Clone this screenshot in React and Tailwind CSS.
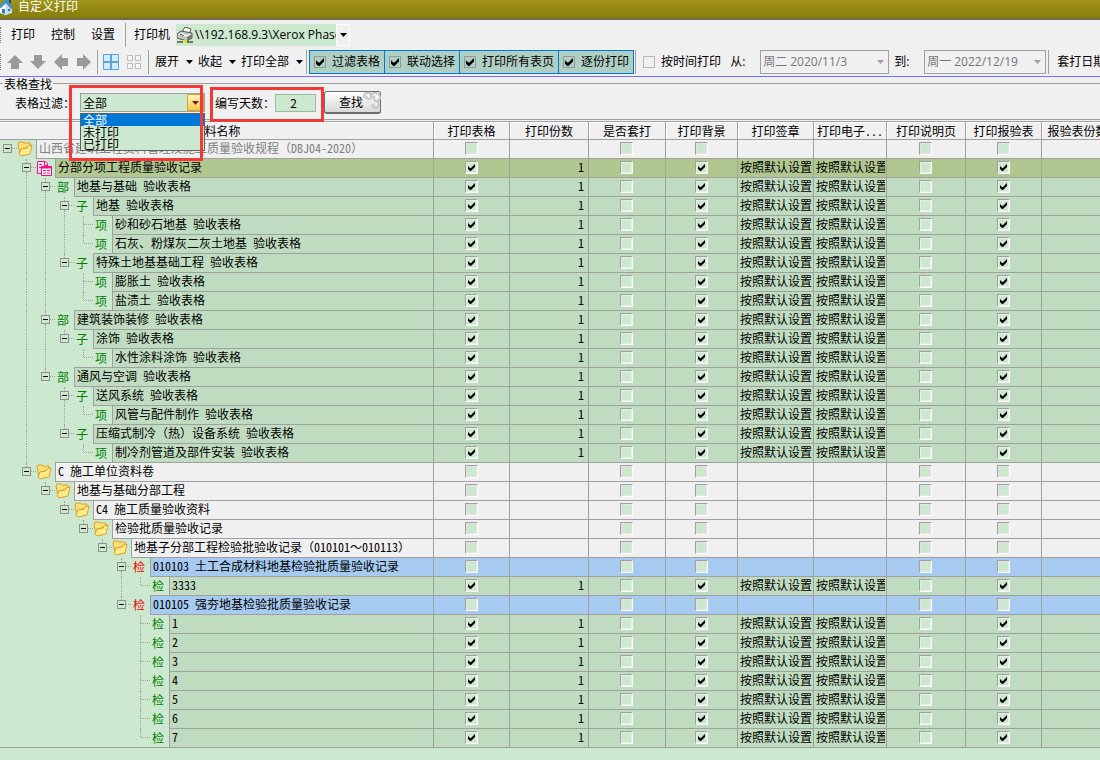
import { useState } from 'react'

const COLUMNS = [
  { key: 'print', label: '打印表格', type: 'check' },
  { key: 'copies', label: '打印份数', type: 'number' },
  { key: 'overlay', label: '是否套打', type: 'check' },
  { key: 'background', label: '打印背景', type: 'check' },
  { key: 'seal', label: '打印签章', type: 'text' },
  { key: 'digital', label: '打印电子...', type: 'text' },
  { key: 'notes', label: '打印说明页', type: 'check' },
  { key: 'report', label: '打印报验表', type: 'check' },
  { key: 'reportCopies', label: '报验表份数', type: 'empty' },
]

const CHECKED = ['print', 'background', 'report']

// [depth, icon, name, kind]
const ROWS = [
  [0, 'folder', '山西省建筑工程资料管理及施工质量验收规程（DBJ04-2020）', 'root'],
  [1, 'doc', '分部分项工程质量验收记录', 'selected'],
  [2, '部', '地基与基础 验收表格', 'item'],
  [3, '子', '地基 验收表格', 'item'],
  [4, '项', '砂和砂石地基 验收表格', 'item'],
  [4, '项', '石灰、粉煤灰二灰土地基 验收表格', 'item'],
  [3, '子', '特殊土地基基础工程 验收表格', 'item'],
  [4, '项', '膨胀土 验收表格', 'item'],
  [4, '项', '盐渍土 验收表格', 'item'],
  [2, '部', '建筑装饰装修 验收表格', 'item'],
  [3, '子', '涂饰 验收表格', 'item'],
  [4, '项', '水性涂料涂饰 验收表格', 'item'],
  [2, '部', '通风与空调 验收表格', 'item'],
  [3, '子', '送风系统 验收表格', 'item'],
  [4, '项', '风管与配件制作 验收表格', 'item'],
  [3, '子', '压缩式制冷（热）设备系统 验收表格', 'item'],
  [4, '项', '制冷剂管道及部件安装 验收表格', 'item'],
  [1, 'folder', 'C 施工单位资料卷', 'group'],
  [2, 'folder', '地基与基础分部工程', 'group'],
  [3, 'folder', 'C4 施工质量验收资料', 'group'],
  [4, 'folder', '检验批质量验收记录', 'group'],
  [5, 'folder', '地基子分部工程检验批验收记录（010101～010113）', 'group'],
  [6, '检', '010103 土工合成材料地基检验批质量验收记录', 'batch'],
  [7, '检', '3333', 'item'],
  [6, '检', '010105 强夯地基检验批质量验收记录', 'batch'],
  [7, '检', '1', 'item'],
  [7, '检', '2', 'item'],
  [7, '检', '3', 'item'],
  [7, '检', '4', 'item'],
  [7, '检', '5', 'item'],
  [7, '检', '6', 'item'],
  [7, '检', '7', 'item'],
].map(([depth, icon, name, kind]) => ({ depth, icon, name, kind }))

const ROW_BG = {
  root: 'bg-[#f0f0f0]',
  group: 'bg-[#f0f0f0]',
  selected: 'bg-[#b0c890]',
  item: 'bg-[#c0dcc0]',
  batch: 'bg-[#a6caf0]',
}

// true when another node follows at the same depth under the same parent
function continues(index, depth) {
  for (let i = index + 1; i < ROWS.length; i++) {
    if (ROWS[i].depth < depth) return false
    if (ROWS[i].depth === depth) return true
  }
  return false
}

function HomeIcon() {
  return (
    <svg className="w-3.5 h-4 shrink-0" viewBox="2 0 14 16">
      <path d="M0 13q7-4 15-1l-3 3H3z" fill="#3c9a2c" />
      <path d="M2 8l5-5 6 5v5l-6 2-5-2z" fill="#f4f8fc" />
      <path d="M8 4l6 5v4l-6 2V8z" fill="#c6d8ea" />
      <path d="M0 7l7-7h3l5 8-2 1-5-6-5 5z" fill="#3f8ed0" />
      <path d="M11 0h2v4l-2-2z" fill="#1d3f66" />
      <path d="M4 9h3v5l-3-1z" fill="#3e78ad" />
      <path d="M10 9h2v2h-2z" fill="#2d74b8" />
    </svg>
  )
}

function PrinterIcon() {
  return (
    <svg className="w-4 h-4 shrink-0" viewBox="0 0 16 16">
      <path d="M5 5l3-5 6 2-2 5z" fill="#fff" stroke="#555" />
      <path d="M0 7l4-3 11 2v5l-5 3-10-3z" fill="#c4c4c4" stroke="#555" />
      <path d="M1 7l9 3 5-3-3 0-2 1-5-2z" fill="#f0f0f0" />
      <path d="M10 10v4l5-3V7z" fill="#777" />
      <path d="M3 7h2v1H3z" fill="#e02020" />
      <path d="M5 8h2v1H5z" fill="#20b030" />
      <path d="M0 15h16" stroke="#111" />
      <path d="M6 13h4v3H6z" fill="#e8e020" />
    </svg>
  )
}

function FolderIcon() {
  return (
    <svg className="w-4 h-4" viewBox="0 0 16 16">
      <path d="M1 3l1-2h4l1 1h6v4l-9 2-1 5z" fill="#fbdf78" stroke="#dca028" />
      <path d="M4 8l6-1 1-2 4-1-2 9-9 2-2-2z" fill="#ffec88" stroke="#dca028" />
    </svg>
  )
}

function DocIcon() {
  return (
    <svg className="w-4 h-4" viewBox="0 0 16 16" fill="none" stroke="#fa0a82">
      <path d="M5 13.500H1.500V1.500H9.500L11.500 3.500V6" fill="#ffe4f0" />
      <path d="M3 4.500H6M3 7.500H5M8.500 2V5.500H12" />
      <path d="M5.500 6.500H15.500V15.500H5.500z" fill="#fff" />
      <path d="M5 7.500H16" strokeWidth="2" />
      <path d="M7 10.500H10M11 10.500H14M7 13H10M11 13H14" />
    </svg>
  )
}

function Caret({ className = 'text-black' }) {
  return (
    <svg className={`w-[7px] h-1 shrink-0 ${className}`} viewBox="0 0 7 4" fill="currentColor">
      <path d="M0 0h7L3.500 4z" />
    </svg>
  )
}

function Tick({ className }) {
  return (
    <svg className={className} viewBox="0 0 7 7" fill="#000">
      <path d="M0 2v3l2 2h1l4-4V0L3 4H2z" />
    </svg>
  )
}

function Arrow({ rotate }) {
  return (
    <svg className={`w-4 h-4 ${rotate}`} viewBox="0 0 16 16" fill="#9a9a9a">
      <path d="M8 1l8 8h-4v6H4V9H0z" />
    </svg>
  )
}

function GridIcon({ active }) {
  const stroke = active ? '#5aa2dc' : '#bdbdbd'
  const fill = active ? '#d4ecfc' : '#f6f6f6'
  return (
    <svg className="w-4 h-4" viewBox="0 0 16 16" fill={fill} stroke={stroke}>
      {active ? (
        <path d="M.500.500h15v15H.500zM7.500 0v16M8.500 0v16M0 7.500h16M0 8.500h16" />
      ) : (
        <path d="M1.500 1.500h5v5h-5zM9.500 1.500h5v5h-5zM1.500 9.500h5v5h-5zM9.500 9.500h5v5h-5z" />
      )}
    </svg>
  )
}

function Separator({ className = '' }) {
  return <span className={`w-px h-6 bg-[#a0a0a0] shrink-0 ${className}`} />
}

function Grip() {
  return <span className="h-4 border-l border-dotted border-[#808080] shrink-0" />
}

function MenuButton({ label, className = '' }) {
  return (
    <button className={`flex items-center gap-[7px] shrink-0 ${className}`}>
      {label}
      <Caret />
    </button>
  )
}

function ToggleButton({ label }) {
  const [on, setOn] = useState(true)
  return (
    <label className="flex items-center gap-1.5 h-6 px-1 -ml-px border border-[#0078d7] bg-[#b0cfc4]">
      <span className="grid place-items-center">
        <input
          type="checkbox"
          checked={on}
          onChange={() => setOn(!on)}
          className="col-start-1 row-start-1 appearance-none w-3 h-3 border border-[#909c98]"
        />
        {on && <Tick className="col-start-1 row-start-1 w-2 h-2 pointer-events-none" />}
      </span>
      {label}
    </label>
  )
}

function DateBox({ value, label, className }) {
  return (
    <button
      aria-label={label}
      disabled
      className={`flex items-center justify-between shrink-0 h-6 pl-0.5 pr-1 border border-[#a0a0a0] text-[#777] ${className}`}
    >
      {value}
      <Caret className="text-[#a0a0a0]" />
    </button>
  )
}

function GridCheckbox({ label, defaultChecked, dim }) {
  const [on, setOn] = useState(defaultChecked)
  return (
    <span className="grid place-items-center pt-0.5 pr-px">
      <input
        type="checkbox"
        aria-label={label}
        checked={on}
        onChange={() => setOn(!on)}
        className={`col-start-1 row-start-1 appearance-none w-[13px] h-[13px] border border-t-[#a0a0a0] border-l-[#a0a0a0] border-r-white border-b-white bg-[#cce8cf] ${
          dim ? 'shadow-[inset_0_0_0_1px_#e3e3e3]' : 'shadow-[inset_0_0_0_1px_#e6efe6]'
        }`}
      />
      {on && <Tick className="col-start-1 row-start-1 w-[7px] h-[7px] pointer-events-none" />}
    </span>
  )
}

function NodeIcon({ icon, kind }) {
  if (icon === 'folder') return <FolderIcon />
  if (icon === 'doc') return <DocIcon />
  return (
    <span className={`pl-0.5 font-medium ${kind === 'batch' ? 'text-[#f00000]' : 'text-[#008000]'}`}>
      {icon}
    </span>
  )
}

function TreeCell({ row, index }) {
  const next = ROWS[index + 1]
  const hasChildren = next && next.depth > row.depth
  const more = continues(index, row.depth)
  const guides = Array.from({ length: row.depth }, (_, d) => d)
  const last = !next

  return (
    <div className={`flex h-[19px] bg-[#cce8cf] ${last ? 'border-b border-[#a0a0a0]' : ''}`}>
      {guides.map((d) => (
        <span key={d} className="w-[19px] pl-[7px] shrink-0">
          {continues(index, d) && (
            <span className="block h-full border-l border-dotted border-[#a0a0a0]" />
          )}
        </span>
      ))}
      {/* Expander or elbow */}
      <span className="w-[17px] flex shrink-0">
        {hasChildren ? (
          <span className="w-[9px] ml-[3px] h-full flex flex-col items-center">
            <span className={`h-1 w-px ${row.depth > 0 ? 'border-l border-dotted border-[#a0a0a0]' : ''}`} />
            <button
              aria-label="收起节点"
              className="w-[9px] h-[9px] border border-[#909090] flex items-center justify-center"
            >
              <span className="w-[5px] h-px bg-black" />
            </button>
            <span className={`flex-1 w-px ${more ? 'border-l border-dotted border-[#a0a0a0]' : ''}`} />
          </span>
        ) : (
          <span className="ml-[7px] h-full w-px flex flex-col">
            <span className="h-2 border-l border-dotted border-[#a0a0a0]" />
            <span className={`flex-1 ${more ? 'border-l border-dotted border-[#a0a0a0]' : ''}`} />
          </span>
        )}
        <span className="flex-1 mt-2 border-t border-dotted border-[#a0a0a0]" />
      </span>
      <span className="w-[19px] shrink-0 pt-px">
        <NodeIcon icon={row.icon} kind={row.kind} />
      </span>
      <span
        className={`flex-1 min-w-0 pl-0.5 leading-4 whitespace-nowrap overflow-hidden border-l border-[#a0a0a0] shadow-[0_-1px_0_#a0a0a0] ${
          last ? '' : 'border-b'
        } ${ROW_BG[row.kind]} ${row.kind === 'root' ? 'text-[#808080]' : ''}`}
      >
        {row.name}
      </span>
    </div>
  )
}

function DataCell({ column, row }) {
  const isData = row.kind === 'item' || row.kind === 'selected'
  const base = `p-0 h-[19px] align-top border-r border-b border-[#a0a0a0] whitespace-nowrap ${ROW_BG[row.kind]}`

  if (column.type === 'check') {
    return (
      <td className={base}>
        <GridCheckbox
          label={`${row.name} ${column.label}`}
          defaultChecked={isData && CHECKED.includes(column.key)}
          dim={!isData}
        />
      </td>
    )
  }
  if (column.type === 'number') {
    return (
      <td className={base}>
        <div className="pr-1 text-right leading-4">{isData ? '1' : ''}</div>
      </td>
    )
  }
  if (column.type === 'text') {
    return (
      <td className={base}>
        <div className="pl-0.5 mr-px leading-4 overflow-hidden">{isData ? '按照默认设置' : ''}</div>
      </td>
    )
  }
  return <td className={base} />
}

function Toolbars() {
  return (
    <div className="bg-[#f0f0f0] border-b border-[#7070f8] whitespace-nowrap overflow-hidden">
      <div className="flex items-center h-[29px]">
        <Grip />
        <button className="ml-2.5">打印</button>
        <button className="ml-4">控制</button>
        <button className="ml-4">设置</button>
        <Separator className="ml-2.5" />
        <span className="ml-2">打印机</span>
        <div className="ml-1.5 flex items-center h-[22px] w-[160px] pl-px gap-0.5 bg-[#cce8cf] overflow-hidden">
          <PrinterIcon />
          <span>\\192.168.9.3\Xerox Phaser</span>
        </div>
        <button aria-label="选择打印机" className="h-[22px] w-3.5 border border-white flex items-center justify-center">
          <Caret />
        </button>
      </div>

      <div className="flex items-center h-[27px] pb-0.5">
        <Grip />
        <div className="flex gap-[7px] ml-1.5 shrink-0">
          <button aria-label="上移"><Arrow rotate="rotate-0" /></button>
          <button aria-label="下移"><Arrow rotate="rotate-180" /></button>
          <button aria-label="左移"><Arrow rotate="-rotate-90" /></button>
          <button aria-label="右移"><Arrow rotate="rotate-90" /></button>
        </div>
        <Separator className="ml-[5px]" />
        <button aria-label="全选" className="ml-[5px]"><GridIcon active /></button>
        <button aria-label="全不选" className="ml-[7px]"><GridIcon /></button>
        <Separator className="ml-1.5" />
        <MenuButton label="展开" className="ml-1.5" />
        <MenuButton label="收起" className="ml-[5px]" />
        <MenuButton label="打印全部" className="ml-[5px]" />
        <Separator className="ml-[3px]" />
        <div className="flex ml-[3px] shrink-0">
          <ToggleButton label="过滤表格" />
          <ToggleButton label="联动选择" />
          <ToggleButton label="打印所有表页" />
          <ToggleButton label="逐份打印" />
        </div>
        <Separator className="ml-px" />
        <label className="flex items-center gap-1.5 ml-[7px] shrink-0">
          <input type="checkbox" className="appearance-none w-3 h-3 border border-[#b8b8b8]" />
          按时间打印
        </label>
        <span className="ml-[9px] w-[30px] shrink-0">从:</span>
        <DateBox label="开始日期" value="周二 2020/11/3" className="w-[129px]" />
        <span className="ml-[5px] w-[30px] shrink-0">到:</span>
        <DateBox label="结束日期" value="周一 2022/12/19" className="w-[122px]" />
        <Separator className="ml-0.5" />
        <span className="ml-2 shrink-0">套打日期</span>
      </div>
    </div>
  )
}

function FilterBar() {
  const [filter, setFilter] = useState('全部')
  const [days, setDays] = useState('2')
  const options = ['全部', '未打印', '已打印']

  return (
    <div className="relative bg-[#f0f0f0] h-11 font-['Noto_Sans_Mono_CJK_SC','Noto_Sans_CJK_SC',sans-serif] whitespace-nowrap">
      <div className="flex items-center h-[13px] gap-px">
        <span className="w-[3px] h-px bg-[#a0a0a0]" />
        <span>表格查找</span>
        <span className="flex-1 h-px bg-[#a0a0a0]" />
      </div>
      <div className="flex items-center h-[25px] pl-[15px]">
        <label htmlFor="filter" className="w-[65px]">表格过滤：</label>
        <div className="flex w-[125px] h-[19px] border border-[#a0a0a0] bg-[#cce8cf]">
          <select
            id="filter"
            value={filter}
            onChange={(e) => setFilter(e.target.value)}
            className="appearance-none flex-1 min-w-0 pl-0.5 h-[17px] leading-[17px] outline-none"
          >
            {options.map((option) => (
              <option key={option}>{option}</option>
            ))}
          </select>
          <span className="w-[17px] flex items-center justify-center border border-[#d8a030] bg-gradient-to-b from-[#fff6c0] to-[#f8c838] pointer-events-none">
            <Caret className="text-[#7a2000]" />
          </span>
        </div>
        <label htmlFor="days" className="ml-2.5 w-[60px]">编写天数：</label>
        <input
          id="days"
          value={days}
          onChange={(e) => setDays(e.target.value)}
          className="w-[41px] h-[18px] border border-[#9cb8a0] bg-[#cce8cf] text-center pr-1 outline-none font-['Noto_Sans_CJK_SC',sans-serif]"
        />
        <button className="ml-2 w-[57px] h-[23px] pl-3.5 flex items-center rounded-[3px] border border-[#6c6c6c] border-b-2 bg-gradient-to-b from-white to-[#d8d8d8]">
          查找
          <svg className="w-[18px] h-[18px] self-start shrink-0" viewBox="0 0 18 18" fill="none" stroke="#c4c4c4" strokeWidth="2">
            <path d="M1 6q-1-4 3-5t4 3-3 3-1-3M8 3q3-4 7-1t1 6-5-1 1-2M15 9q2 7-2 7t-3-4" />
          </svg>
        </button>
      </div>
      <div className="mt-1 h-px bg-[#a0a0a0]" />

      {/* Open list of the filter box */}
      <ul className="absolute z-10 left-20 top-9 w-[125px] border border-[#606060] bg-[#cce8cf] leading-3">
        {options.map((option) => (
          <li
            key={option}
            onClick={() => setFilter(option)}
            className={`h-3 pl-0.5 ${option === filter ? 'bg-[#0078d7] text-white' : ''}`}
          >
            {option}
          </li>
        ))}
      </ul>

      {/* Callouts */}
      <div className="absolute z-20 left-[69px] top-2 w-[134px] h-[76px] border-3 border-[#f43838] pointer-events-none" />
      <div className="absolute z-20 left-[210px] top-2.5 w-[114px] h-[35px] border-3 border-[#f43838] pointer-events-none" />
    </div>
  )
}

function PrintTable() {
  return (
    <div className="overflow-hidden font-['Noto_Sans_Mono_CJK_SC','Noto_Sans_CJK_SC',sans-serif]">
      <table className="w-full min-w-[1114px] table-fixed border-separate border-spacing-0">
        <colgroup>
          <col className="w-[434px]" />
          <col className="w-[76px]" />
          <col className="w-[79px]" />
          <col className="w-[77px]" />
          <col className="w-[72px]" />
          <col className="w-[76px]" />
          <col className="w-[73px]" />
          <col className="w-[79px]" />
          <col className="w-[76px]" />
          <col />
        </colgroup>
        <thead>
          <tr className="bg-[#f0f0f0] leading-[17px]">
            <th className="p-0 h-[19px] font-normal border-t border-b border-r border-[#a0a0a0] shadow-[inset_0_1px_0_#fff]">
              资料名称
            </th>
            {COLUMNS.map((column) => (
              <th
                key={column.key}
                className="p-0 h-[19px] font-normal whitespace-nowrap border-t border-b border-r border-[#a0a0a0] shadow-[inset_1px_1px_0_#fff]"
              >
                {column.label}
              </th>
            ))}
          </tr>
        </thead>
        <tbody>
          {ROWS.map((row, index) => (
            <tr key={index}>
              <td className="p-0 h-[19px] border-r border-[#a0a0a0]">
                <TreeCell row={row} index={index} />
              </td>
              {COLUMNS.map((column) => (
                <DataCell key={column.key} column={column} row={row} />
              ))}
            </tr>
          ))}
        </tbody>
      </table>
    </div>
  )
}

function App() {
  return (
    <div className="min-h-screen bg-[#cce8cf] text-black text-[12px] leading-4 font-['Open_Sans','Noto_Sans_CJK_SC',sans-serif] overflow-hidden">
      <header className="flex items-start h-5 gap-1 border-b-2 border-[#6e6a50] bg-gradient-to-b from-[#a09418] to-[#887c0c] text-white overflow-hidden">
        <HomeIcon />
        <h1 className="-mt-px">自定义打印</h1>
      </header>
      <Toolbars />
      <FilterBar />
      <PrintTable />
    </div>
  )
}

export default App
